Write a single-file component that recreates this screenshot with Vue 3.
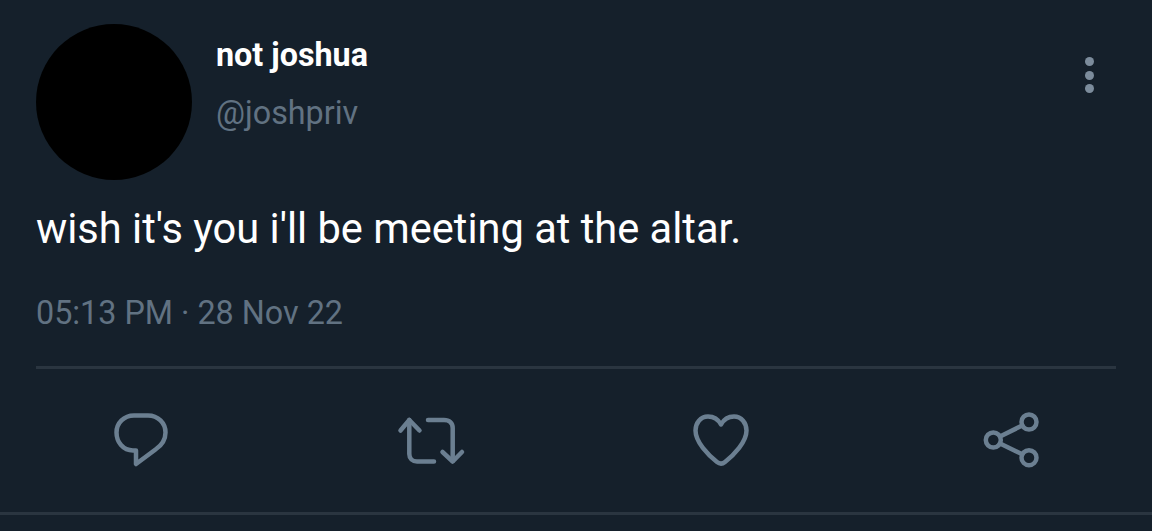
<template>
  <main class="tweet">
    <!-- HEADER -->
    <section class="tweet__header">
      <div class="avatar"></div>
      <div class="names">
        <span class="names__name">not joshua</span>
        <span class="names__handle">@joshpriv</span>
      </div>
      <div class="dots">
        <span></span>
        <span></span>
        <span></span>
      </div>
    </section>

    <p class="tweet__text">wish it's you i'll be meeting at the altar.</p>
    <p class="tweet__time">05:13 PM · 28 Nov 22</p>

    <div class="divider"></div>

    <!-- ACOES -->
    <section class="tweet__actions">
      <svg viewBox="0 0 70 60">
        <path d="M30 53V39.500H27C17 39.500 10.500 31 10.500 21.500C10.500 12 18 4.500 28 4.500H42C52 4.500 59.500 12 59.500 21.500C59.500 29 55.500 34.500 49.500 38.500Z" />
      </svg>
      <svg viewBox="0 0 70 60">
        <path d="M13.300 9V43C13.300 47.500 16.500 50.500 21 50.500H38" />
        <path d="M4.500 19.500L13.300 9L23.500 19.500" />
        <path d="M32 9H48C53.500 9 56.700 12 56.700 17V50" />
        <path d="M46.500 41L56.700 50.500L66 41" />
      </svg>
      <svg viewBox="0 0 70 60">
        <path d="M35 13.500C32 8 27 5.500 22 5.500C14.500 5.500 9.500 12 9.500 19.500C9.500 31 22 44 31 51C33.500 53 36.500 53 39 51C48 44 60.500 31 60.500 19.500C60.500 12 55.500 5.500 48 5.500C43 5.500 38 8 35 13.500Z" />
      </svg>
      <svg viewBox="0 0 70 60">
        <circle cx="53" cy="11" r="7.500" />
        <circle cx="17.300" cy="29" r="7.500" />
        <circle cx="53" cy="46.700" r="7.500" />
        <path d="M24 25.500L46.300 14.500M24 32.500L46.300 43.200" />
      </svg>
    </section>

    <div class="divider divider--full"></div>
  </main>
</template>

<script setup>
</script>

<style scoped>
.tweet {
  height: 531px;
  overflow: hidden;
  padding-top: 24px;
  box-sizing: border-box;
  background-color: #15202b;
  font-family: Roboto, sans-serif;
}

/* HEADER */
.tweet__header {
  display: flex;
  padding: 0 36px;
}

.avatar {
  width: 156px;
  height: 156px;
  border-radius: 50%;
  background-color: #000;
  flex-shrink: 0;
}

.names {
  display: flex;
  flex-direction: column;
  flex: 1;
  margin-left: 24px;
  padding-top: 12px;
}

.names__name {
  color: #fff;
  font-size: 32.300px;
  font-weight: 700;
  line-height: 38px;
}

.names__handle {
  color: #617282;
  font-size: 32.300px;
  line-height: 38px;
  margin-top: 20px;
}

.dots {
  display: flex;
  flex-direction: column;
  gap: 4.500px;
  margin: 33px 22px 0 0;
}

.dots span {
  width: 9px;
  height: 9px;
  border-radius: 50%;
  background-color: #7c8c9c;
}

/* TEXTO */
.tweet__text {
  margin: 23px 36px 0;
  color: #fff;
  font-size: 41.600px;
  line-height: 52px;
}

.tweet__time {
  margin: 39px 36px 0;
  color: #617282;
  font-size: 32.300px;
  line-height: 38px;
}

.divider {
  height: 3px;
  margin: 34px 36px 0;
  background-color: #2a3540;
}

.divider--full {
  margin: 41px 0 0;
}

/* ACOES */
.tweet__actions {
  display: flex;
  justify-content: space-between;
  padding: 0 106px;
  margin-top: 42px;
}

.tweet__actions svg {
  width: 70px;
  height: 60px;
  fill: none;
  stroke: #6b7f91;
  stroke-width: 4.500;
  stroke-linecap: round;
  stroke-linejoin: round;
}
</style>
